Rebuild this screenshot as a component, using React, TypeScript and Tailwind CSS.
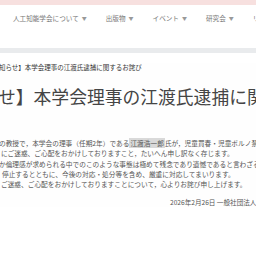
const navItems = ["人工知能学会について", "出版物", "イベント", "研究会", "リンク"];

function Caret() {
  return <span className="ml-[3px] text-[5px] align-middle text-[#999]">▼</span>;
}

export default function App() {
  return (
    <div className="w-[256px] h-[256px] overflow-hidden bg-white font-['Noto_Sans_CJK_JP','Noto_Sans',sans-serif]">
      <div className="h-[5px] bg-[#f7e0df]" />
      <nav className="h-[43px] flex items-start pt-[8px] pl-[13px] gap-[19px] whitespace-nowrap text-[6.6px] leading-[10px] text-[#777]">
        {navItems.map((item) => (
          <span key={item} className="flex items-center">
            {item}
            <Caret />
          </span>
        ))}
      </nav>
      <div className="h-[5px] bg-[#e9ebed]" />
      <main className="bg-[#fefefe] whitespace-nowrap">
        <div className="mt-[10px] h-[8px] leading-[8px] text-[6.5px] text-[#333] -ml-[1px]">
          知らせ】本学会理事の江渡氏逮捕に関するお詫び
        </div>
        <h1 className="mt-[15px] h-[20px] leading-[20px] text-[17.8px] text-[#454545] -ml-[2px]">
          せ】本学会理事の江渡氏逮捕に関する
        </h1>
        <div className="mt-[32px] text-[6.7px] leading-[10.3px] text-[#555]">
          <p className="-ml-[1px]">
            の教授で，本学会の理事（任期2年）である
            <span className="bg-[#d9d9d9] px-[1px]">江渡浩一郎</span>
            氏が，児童買春・児童ポルノ禁止法違反
          </p>
          <p className="ml-[1px]">にご迷惑、ご心配をおかけしておりますこと，たいへん申し訳なく存じます。</p>
          <p className="-ml-[1px]">か倫理感が求められる中でのこのような事態は極めて残念であり遺憾であると言わざるを</p>
          <p className="ml-[2px]">停止するとともに、今後の対応・処分等を含め、厳重に対応してまいります。</p>
          <p className="ml-[1px]">ご迷惑、ご心配をおかけしておりますことについて，心よりお詫び申し上げます。</p>
        </div>
        <div className="mt-[8px] pl-[170px] text-[6.6px] leading-[10px] text-[#555]">
          2026年2月26日 一般社団法人 人工知能学会
        </div>
      </main>
    </div>
  );
}
